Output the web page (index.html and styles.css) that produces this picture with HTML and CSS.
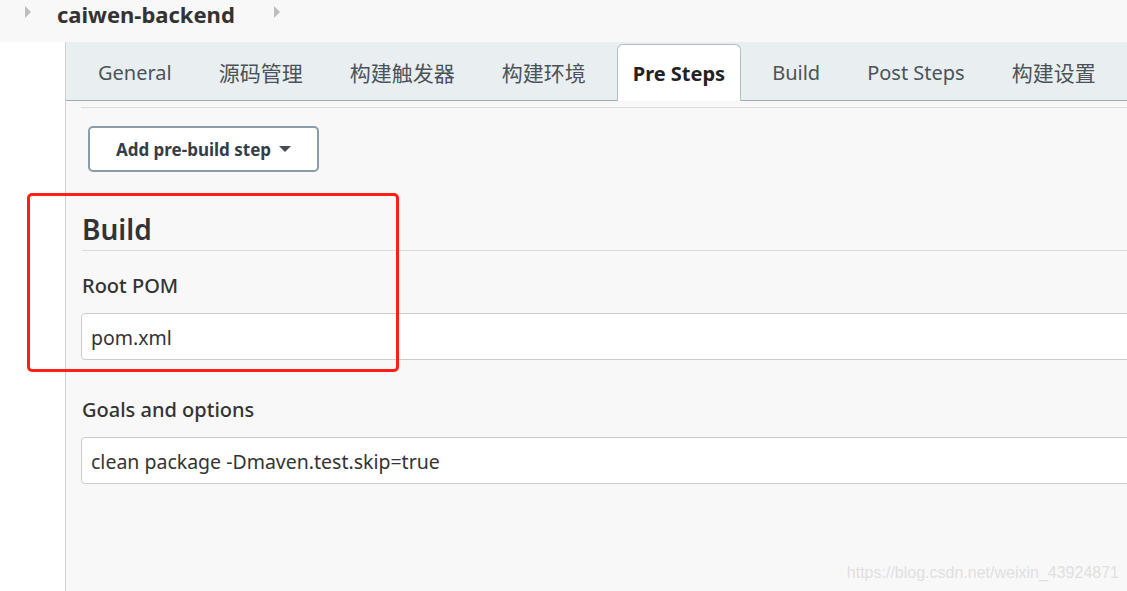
FILE: index.html
```html
<!DOCTYPE html>
<html lang="zh">
<head>
  <meta charset="UTF-8" />
  <meta name="viewport" content="width=device-width, initial-scale=1.0" />
  <title>caiwen-backend Config</title>
  <link rel="stylesheet" href="styles.css">
</head>
<body>
  <div class="topbar">
    <span class="crumb-arrow"></span>
    <span class="crumb-name">caiwen-backend</span>
    <span class="crumb-arrow"></span>
  </div>

  <div class="layout">
    <div class="sidebar"></div>
    <div class="main">
      <div class="tabs">
        <div class="tab">General</div>
        <div class="tab cn">源码管理</div>
        <div class="tab cn">构建触发器</div>
        <div class="tab cn">构建环境</div>
        <div class="tab active">Pre Steps</div>
        <div class="tab">Build</div>
        <div class="tab">Post Steps</div>
        <div class="tab cn">构建设置</div>
      </div>

      <div class="content">
        <div class="section-rule"></div>
        <button class="add-step">Add pre-build step <span class="caret"></span></button>

        <h2 class="section-title">Build</h2>

        <div class="field">
          <div class="field-label">Root POM</div>
          <input class="field-input" type="text" value="pom.xml">
        </div>

        <div class="field">
          <div class="field-label">Goals and options</div>
          <input class="field-input" type="text" value="clean package -Dmaven.test.skip=true">
        </div>
      </div>
    </div>
  </div>

  <div class="highlight"></div>
  <div class="watermark">https://blog.csdn.net/weixin_43924871</div>
</body>
</html>
```

FILE: styles.css
```css
body {
  margin: 0;
  font-family: "Noto Sans", "Noto Sans CJK SC", sans-serif;
  color: #333;
  background: #ffffff;
  height: 591px;
  overflow: hidden;
  position: relative;
}
.topbar {
  height: 42px;
  background: #f8f8f8;
  display: flex;
  align-items: flex-start;
  padding-left: 25px;
}
.crumb-arrow {
  width: 0;
  height: 0;
  margin-top: 6px;
  border-top: 6px solid transparent;
  border-bottom: 6px solid transparent;
  border-left: 6px solid #bdbdbd;
}
.crumb-name {
  font-size: 22px;
  font-weight: 700;
  color: #333;
  line-height: 28px;
  margin: 0 39px 0 26px;
}
.layout {
  display: flex;
  height: 549px;
}
.sidebar {
  width: 65px;
  background: #ffffff;
}
.main {
  flex: 1;
  border-left: 1px solid #cfcfcf;
  background: #f8f8f8;
  overflow: hidden;
}
.tabs {
  height: 58px;
  background: #e9eef1;
  border-bottom: 1px solid #9ea9b0;
  display: flex;
  align-items: flex-end;
  gap: 15px;
  padding-left: 16px;
}
.tab {
  height: 56px;
  line-height: 58px;
  padding: 0 16px;
  font-size: 20px;
  color: #4b5358;
  white-space: nowrap;
}
.tab.cn {
  font-size: 21px;
}
.tab.active {
  background: #ffffff;
  border: 1px solid #b3bdc3;
  border-bottom: none;
  border-radius: 6px 6px 0 0;
  margin-bottom: -1px;
  padding: 0 15px;
  font-weight: 700;
  color: #222;
}
.content {
  padding-left: 15px;
}
.section-rule {
  margin-top: 6px;
  border-top: 1px solid #dcdcdc;
}
.add-step {
  margin: 18px 0 0 7px;
  width: 231px;
  height: 46px;
  background: #ffffff;
  border: 2px solid #8b9ca8;
  border-radius: 5px;
  font-family: "Noto Sans", sans-serif;
  font-size: 17px;
  font-weight: 700;
  color: #333e48;
  cursor: pointer;
  display: flex;
  align-items: center;
  justify-content: center;
  gap: 8px;
}
.caret {
  width: 0;
  height: 0;
  border-left: 6px solid transparent;
  border-right: 6px solid transparent;
  border-top: 6px solid #444c53;
}
.section-title {
  margin: 38px 0 0 1px;
  font-size: 28px;
  font-weight: 600;
  line-height: 38px;
  padding-bottom: 2px;
  border-bottom: 1px solid #dcdcdc;
}
.field {
  margin-top: 22px;
}
.field + .field {
  margin-top: 37px;
}
.field-label {
  font-size: 20px;
  font-weight: 500;
  line-height: 26px;
  margin-left: 1px;
  margin-bottom: 14px;
}
.field-input {
  box-sizing: border-box;
  display: block;
  width: calc(100% + 10px);
  height: 47px;
  padding: 2px 9px 0;
  border: 1px solid #cccccc;
  border-radius: 4px;
  background: #ffffff;
  font-family: "Noto Sans", sans-serif;
  font-size: 19.5px;
  color: #333;
}
.highlight {
  position: absolute;
  left: 27px;
  top: 193px;
  width: 366px;
  height: 173px;
  border: 3px solid #ff1f17;
  border-radius: 5px;
}
.watermark {
  position: absolute;
  right: 8px;
  bottom: 9px;
  font-family: "Liberation Sans", Arial, sans-serif;
  font-size: 16px;
  color: #e0e0e0;
}
```
